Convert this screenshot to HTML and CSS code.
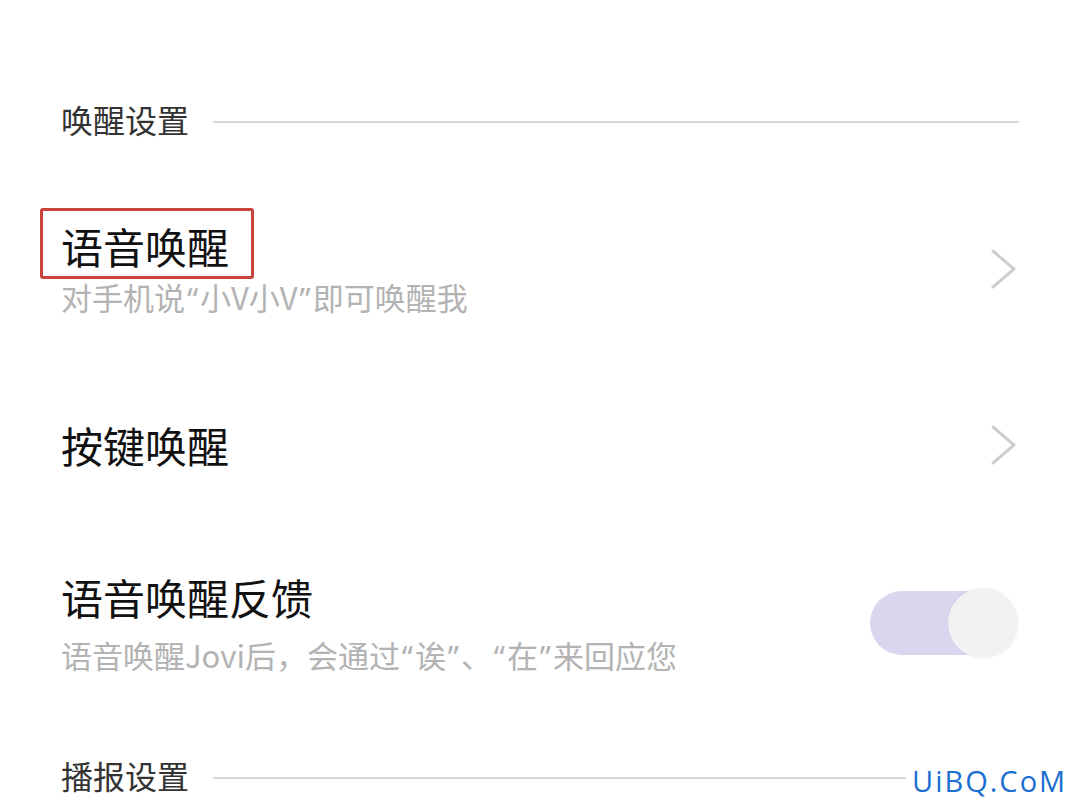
FILE: index.html
```html
<!DOCTYPE html>
<html lang="zh-CN">
<head>
<meta charset="utf-8">
<title>唤醒设置</title>
<link rel="stylesheet" href="styles.css">
</head>
<body>
<div class="page">
  <div class="group-title">
    <span class="group-label">唤醒设置</span>
    <span class="group-line"></span>
  </div>

  <div class="item">
    <div class="item-text">
      <div class="item-title highlighted">语音唤醒</div>
      <div class="item-sub">对手机说<span class="q">“</span>小V小V<span class="q">”</span>即可唤醒我</div>
    </div>
    <svg class="chevron" viewBox="0 0 27 42" width="27" height="42" aria-hidden="true">
      <polyline points="3,3 24,21 3,39" fill="none" stroke="#cfcfcf" stroke-width="3" stroke-linecap="round" stroke-linejoin="round"/>
    </svg>
  </div>

  <div class="item">
    <div class="item-text">
      <div class="item-title">按键唤醒</div>
    </div>
    <svg class="chevron" viewBox="0 0 27 42" width="27" height="42" aria-hidden="true">
      <polyline points="3,3 24,21 3,39" fill="none" stroke="#cfcfcf" stroke-width="3" stroke-linecap="round" stroke-linejoin="round"/>
    </svg>
  </div>

  <div class="item item-feedback">
    <div class="item-text">
      <div class="item-title">语音唤醒反馈</div>
      <div class="item-sub item-sub-wide">语音唤醒Jovi后，会通过<span class="q">“</span>诶<span class="q">”</span>、<span class="q">“</span>在<span class="q">”</span>来回应您</div>
    </div>
    <div class="toggle">
      <span class="toggle-track"></span>
      <span class="toggle-knob"></span>
    </div>
  </div>

  <div class="group-title group-title-next">
    <span class="group-label">播报设置</span>
    <span class="group-line"></span>
  </div>

  <div class="watermark">UiBQ.CoM</div>
</div>
</body>
</html>
```

FILE: styles.css
```css
* {
  box-sizing: border-box;
}

html, body {
  margin: 0;
  padding: 0;
  background: #ffffff;
}

body {
  font-family: "Noto Sans CJK SC", "Noto Sans", sans-serif;
  width: 1079px;
  height: 810px;
  overflow: hidden;
}

.page {
  position: relative;
  padding: 53px 0 0 0;
  height: 810px;
}

.group-title {
  display: flex;
  align-items: center;
  gap: 24px;
  height: 60px;
  margin: 36px 60px 32px 61px;
}

.group-label {
  font-size: 32px;
  line-height: 60px;
  color: #333333;
  white-space: nowrap;
}

.group-line {
  flex: 1;
  height: 2px;
  margin-top: 6px;
  background: #d8d8d8;
}

.item {
  display: flex;
  align-items: center;
  justify-content: space-between;
  height: 176px;
  padding: 0 62px 0 61px;
}

.item-feedback {
  padding-top: 6px;
}

.item-text {
  display: flex;
  flex-direction: column;
}

.item-title {
  font-size: 42px;
  line-height: 50px;
  color: #111111;
  white-space: nowrap;
  align-self: flex-start;
}

.highlighted {
  position: relative;
}

.highlighted::after {
  content: "";
  position: absolute;
  left: -21px;
  top: -13px;
  right: -25px;
  bottom: -8px;
  border: 3px solid #c9423b;
  border-radius: 3px;
}

.item-sub {
  margin-top: 6px;
  font-size: 31px;
  line-height: 40px;
  color: #b3b3b3;
  white-space: nowrap;
}

.item-sub-wide {
  margin-top: 13px;
}

.q {
  display: inline-block;
  width: 15px;
  text-align: center;
  font-family: "Noto Sans", sans-serif;
}

.chevron {
  display: block;
  flex: none;
}

.toggle {
  position: relative;
  flex: none;
  width: 148px;
  height: 70px;
  margin-right: -1px;
  margin-top: -3px;
}

.toggle-track {
  position: absolute;
  left: 0;
  top: 3px;
  width: 140px;
  height: 64px;
  border-radius: 32px;
  background: #d9d7ed;
}

.toggle-knob {
  position: absolute;
  right: 0;
  top: 0;
  width: 70px;
  height: 70px;
  border-radius: 50%;
  background: #f2f2f4;
  box-shadow: 0 0 3px rgba(0, 0, 0, 0.06);
}

.watermark {
  position: absolute;
  left: 906px;
  top: 762px;
  padding-left: 6px;
  background: #ffffff;
  font-family: "Open Sans", "DejaVu Sans", sans-serif;
  font-size: 29px;
  line-height: 38px;
  letter-spacing: 2px;
  color: #1a6fd1;
}
```
